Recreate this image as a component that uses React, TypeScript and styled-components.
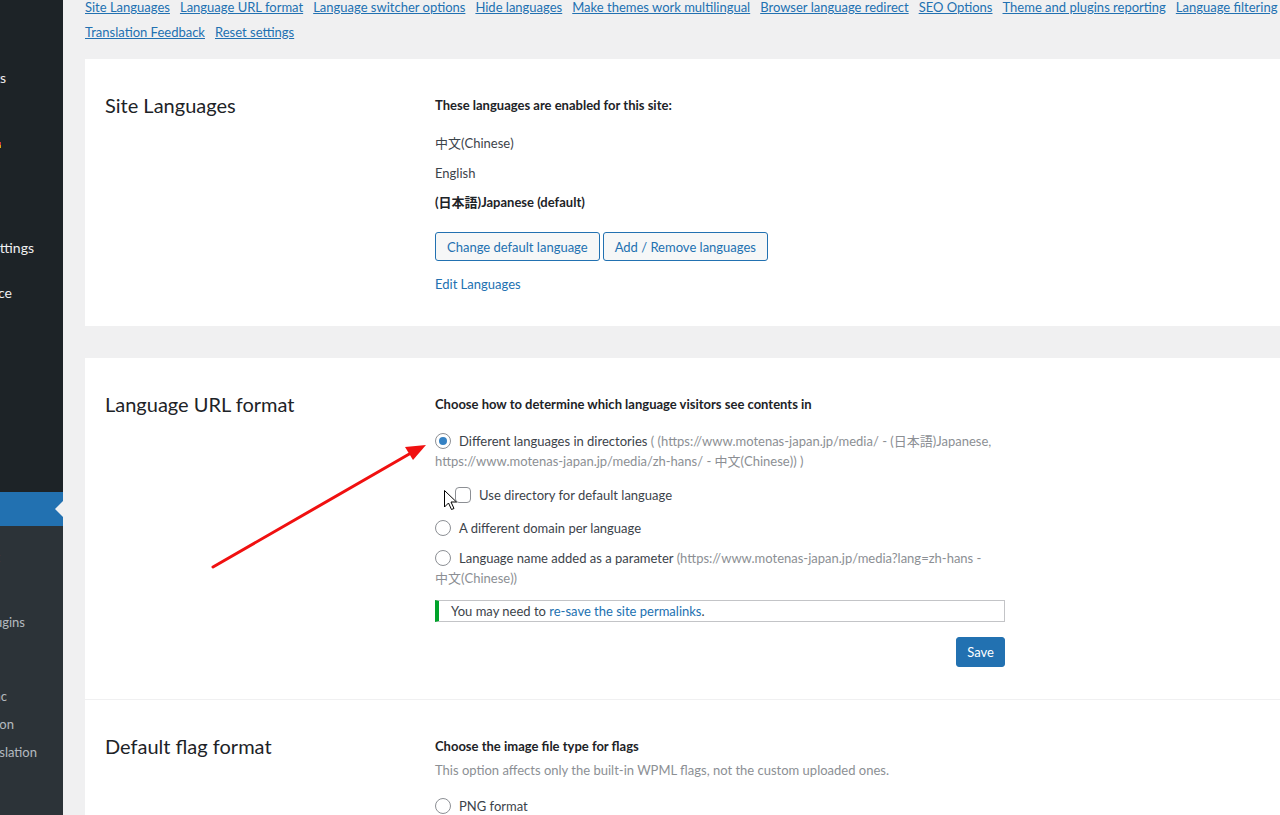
import React from 'react';
import styled, { createGlobalStyle } from 'styled-components';

const FONT = `Lato, "Noto Sans CJK JP", "Noto Sans", sans-serif`;

const GlobalStyle = createGlobalStyle`
  html, body {
    margin: 0;
    padding: 0;
  }
  body {
    background: #f0f0f1;
    font-family: ${FONT};
    font-size: 13px;
    color: #3c434a;
    overflow: hidden;
  }
  * {
    box-sizing: border-box;
  }
`;

const Page = styled.div`
  position: relative;
  display: flex;
  width: 1280px;
  height: 815px;
  overflow: hidden;
`;

/* ---------- admin menu ---------- */

const Sidebar = styled.nav`
  flex: 0 0 63px;
  display: flex;
  flex-direction: column;
  background: #1d2327;
  overflow: hidden;
`;

const MenuList = styled.ul`
  list-style: none;
  margin: -8px 0 0;
  padding: 0;
`;

const MenuItem = styled.li<{ $current?: boolean }>`
  position: relative;
  height: 34px;
  display: flex;
  align-items: center;
  font-size: 14px;
  color: #f0f0f1;
  background: ${p => (p.$current ? '#2271b1' : 'transparent')};

  ${p =>
    p.$current &&
    `
    &::after {
      content: '';
      position: absolute;
      right: 0;
      top: 50%;
      margin-top: -8px;
      border: 8px solid transparent;
      border-right-color: #f0f0f1;
    }
  `}
`;

const MenuSep = styled.li<{ $h: number }>`
  height: ${p => p.$h}px;
`;

// the menu is scrolled off to the left: only the tail of each label shows
const MenuText = styled.span<{ $end: number }>`
  display: flex;
  flex: 0 0 auto;
  align-items: center;
  justify-content: flex-end;
  width: ${p => p.$end}px;
  white-space: nowrap;
`;

const Badge = styled.span`
  display: inline-block;
  flex: 0 0 auto;
  width: 18px;
  height: 6px;
  margin-left: 4px;
  background: linear-gradient(#d63638 50%, #dba617 50%);
`;

const SubMenu = styled.ul`
  flex: 1;
  list-style: none;
  margin: 0;
  padding: 8px 0 0;
  background: #2c3338;
`;

const SubItem = styled.li<{ $lines?: number }>`
  height: ${p => 10 + 18 * (p.$lines ?? 1)}px;
  display: flex;
  align-items: center;
  font-size: 13px;
  color: rgba(240, 246, 252, 0.7);
`;

/* ---------- main ---------- */

const Main = styled.main`
  flex: 0 0 auto;
  width: 1352px;
  padding-left: 22px;
`;

const Toc = styled.div`
  display: flex;
  flex-wrap: wrap;
  column-gap: 10px;
  width: 1260px;
  margin-top: -5px;
  line-height: 25px;
`;

const TocLink = styled.a`
  color: #2271b1;
  text-decoration: underline;
  font-size: 13px;
  white-space: nowrap;
`;

const Card = styled.section<{ $gap: number; $joined?: boolean }>`
  display: grid;
  grid-template-columns: 330px 570px;
  padding: 32px 20px;
  margin-top: ${p => p.$gap}px;
  background: #fff;
  border-top: ${p => (p.$joined ? '1px solid #f0f0f1' : 'none')};
`;

const Title = styled.h2`
  margin: 0;
  font-size: 20px;
  font-weight: 400;
  line-height: 28px;
  color: #1d2327;
`;

const Body = styled.div`
  display: flex;
  flex-direction: column;
  align-items: flex-start;
`;

const Lead = styled.p`
  margin: 0;
  font-weight: 700;
  line-height: 28px;
  color: #1d2327;
`;

const Desc = styled.p`
  margin: 0;
  line-height: 20px;
  color: #8c8f94;
`;

const LangList = styled.ul`
  list-style: none;
  margin: 14px 0 0;
  padding: 0;
  display: flex;
  flex-direction: column;
  gap: 9.5px;
  line-height: 20px;
`;

const LangItem = styled.li<{ $bold?: boolean }>`
  font-weight: ${p => (p.$bold ? 700 : 400)};
  color: ${p => (p.$bold ? '#1d2327' : '#3c434a')};
`;

const ButtonRow = styled.div`
  display: flex;
  gap: 3px;
  margin-top: 20px;
`;

const SecondaryButton = styled.button`
  height: 29px;
  padding: 0 11px;
  border: 1px solid #2271b1;
  border-radius: 3px;
  background: #f6f7f7;
  color: #2271b1;
  font-family: ${FONT};
  font-size: 13px;
`;

const PlainLink = styled.a`
  margin-top: 13px;
  line-height: 20px;
  color: #2271b1;
  text-decoration: none;
`;

const Option = styled.label<{ $top: number; $indent?: number }>`
  display: block;
  margin-top: ${p => p.$top}px;
  padding-left: ${p => p.$indent ?? 0}px;
  line-height: 20px;
  color: #3c434a;
`;

const Radio = styled.span<{ $checked?: boolean }>`
  position: relative;
  display: inline-block;
  width: 16px;
  height: 16px;
  margin-right: 8px;
  vertical-align: -3px;
  border: 1px solid #8c8f94;
  border-radius: 50%;
  background: #fff;

  ${p =>
    p.$checked &&
    `
    &::before {
      content: '';
      position: absolute;
      left: 3px;
      top: 3px;
      width: 8px;
      height: 8px;
      border-radius: 50%;
      background: #3582c4;
    }
  `}
`;

const Checkbox = styled.span`
  display: inline-block;
  width: 16px;
  height: 16px;
  margin-right: 8px;
  vertical-align: -3px;
  border: 1px solid #8c8f94;
  border-radius: 4px;
  background: #fff;
`;

const Hint = styled.span`
  color: #8c8f94;
  word-break: keep-all;
`;

const Notice = styled.div`
  align-self: stretch;
  margin-top: 12px;
  padding: 0 12px;
  line-height: 20px;
  border: 1px solid #c3c4c7;
  border-left: 4px solid #00a32a;
  background: #fff;
  color: #3c434a;

  a {
    color: #2271b1;
    text-decoration: none;
  }
`;

const SaveRow = styled.div`
  align-self: stretch;
  display: flex;
  justify-content: flex-end;
  margin-top: 15px;
`;

const PrimaryButton = styled.button`
  height: 30px;
  padding: 0 10px;
  border: 1px solid #2271b1;
  border-radius: 3px;
  background: #2271b1;
  color: #fff;
  font-family: ${FONT};
  font-size: 13px;
`;

/* ---------- annotation layer ---------- */

const Annotation = styled.svg`
  position: absolute;
  left: 0;
  top: 0;
  pointer-events: none;
`;

const tocLinks = [
  'Site Languages',
  'Language URL format',
  'Language switcher options',
  'Hide languages',
  'Make themes work multilingual',
  'Browser language redirect',
  'SEO Options',
  'Theme and plugins reporting',
  'Language filtering',
  'Translation Feedback',
  'Reset settings',
];

export default function App() {
  return (
    <>
      <GlobalStyle />
      <Page>
        <Sidebar>
          <MenuList>
            <MenuItem><MenuText $end={0}>Dashboard</MenuText></MenuItem>
            <MenuItem><MenuText $end={0}>Posts</MenuText></MenuItem>
            <MenuItem><MenuText $end={6}>Comments</MenuText></MenuItem>
            <MenuItem><MenuText $end={0}>Media</MenuText></MenuItem>
            <MenuItem><MenuText $end={1}>Updates<Badge /></MenuText></MenuItem>
            <MenuItem><MenuText $end={0}>Pages</MenuText></MenuItem>
            <MenuItem><MenuText $end={0}>Forms</MenuText></MenuItem>
            <MenuItem><MenuText $end={34}>Site Settings</MenuText></MenuItem>
            <MenuSep $h={11} />
            <MenuItem><MenuText $end={12}>Appearance</MenuText></MenuItem>
            <MenuItem><MenuText $end={0}>Plugins</MenuText></MenuItem>
            <MenuItem><MenuText $end={0}>Users</MenuText></MenuItem>
            <MenuItem><MenuText $end={0}>Tools</MenuText></MenuItem>
            <MenuItem><MenuText $end={0}>Settings</MenuText></MenuItem>
            <MenuItem><MenuText $end={0}>SEO</MenuText></MenuItem>
            <MenuSep $h={13} />
            <MenuItem $current><MenuText $end={0}>WPML</MenuText></MenuItem>
          </MenuList>
          <SubMenu>
            <SubItem $lines={2}><MenuText $end={0}>Translation Management</MenuText></SubItem>
            <SubItem><MenuText $end={0}>Languages</MenuText></SubItem>
            <SubItem><MenuText $end={25}>Theme and plugins</MenuText></SubItem>
            <SubItem $lines={2}><MenuText $end={0}>Media Translation</MenuText></SubItem>
            <SubItem><MenuText $end={7}>WP Menus Sync</MenuText></SubItem>
            <SubItem><MenuText $end={14}>Taxonomy translation</MenuText></SubItem>
            <SubItem><MenuText $end={37}>String Translation</MenuText></SubItem>
          </SubMenu>
        </Sidebar>

        <Main>
          <Toc>
            {tocLinks.map(l => (
              <TocLink key={l} href="#">{l}</TocLink>
            ))}
          </Toc>

          <Card $gap={14}>
            <Title>Site Languages</Title>
            <Body>
              <Lead>These languages are enabled for this site:</Lead>
              <LangList>
                <LangItem>中文(Chinese)</LangItem>
                <LangItem>English</LangItem>
                <LangItem $bold>(日本語)Japanese (default)</LangItem>
              </LangList>
              <ButtonRow>
                <SecondaryButton>Change default language</SecondaryButton>
                <SecondaryButton>Add / Remove languages</SecondaryButton>
              </ButtonRow>
              <PlainLink href="#">Edit Languages</PlainLink>
            </Body>
          </Card>

          <Card $gap={32}>
            <Title>Language URL format</Title>
            <Body>
              <Lead>Choose how to determine which language visitors see contents in</Lead>
              <Option $top={13}>
                <Radio $checked />
                Different languages in directories{' '}
                <Hint>
                  ( (https://www.motenas-japan.jp/media/ - (日本語)Japanese,
                  https://www.motenas-japan.jp/media/zh-hans/ - 中文(Chinese)) )
                </Hint>
              </Option>
              <Option $top={14} $indent={20}>
                <Checkbox />
                Use directory for default language
              </Option>
              <Option $top={13}>
                <Radio />
                A different domain per language
              </Option>
              <Option $top={10}>
                <Radio />
                Language name added as a parameter{' '}
                <Hint>(https://www.motenas-japan.jp/media?lang=zh-hans - 中文(Chinese))</Hint>
              </Option>
              <Notice>
                You may need to <a href="#">re-save the site permalinks</a>.
              </Notice>
              <SaveRow>
                <PrimaryButton>Save</PrimaryButton>
              </SaveRow>
            </Body>
          </Card>

          <Card $gap={0} $joined>
            <Title>Default flag format</Title>
            <Body>
              <Lead>Choose the image file type for flags</Lead>
              <Desc>This option affects only the built-in WPML flags, not the custom uploaded ones.</Desc>
              <Option $top={16}>
                <Radio />
                PNG format
              </Option>
            </Body>
          </Card>
        </Main>

        <Annotation width="1280" height="815" viewBox="0 0 1280 815">
          <line x1="213" y1="567" x2="411" y2="453" stroke="#f01010" strokeWidth="3" strokeLinecap="round" />
          <polygon points="426,445 413,460 405,447" fill="#f01010" />
          <path
            d="M444.5 490.5 L444.5 507 L448.5 503 L451.5 509.5 L454 508.5 L451 502 L456.5 502 Z"
            fill="#fff"
            stroke="#000"
            strokeWidth="1"
            strokeLinejoin="round"
          />
        </Annotation>
      </Page>
    </>
  );
}
